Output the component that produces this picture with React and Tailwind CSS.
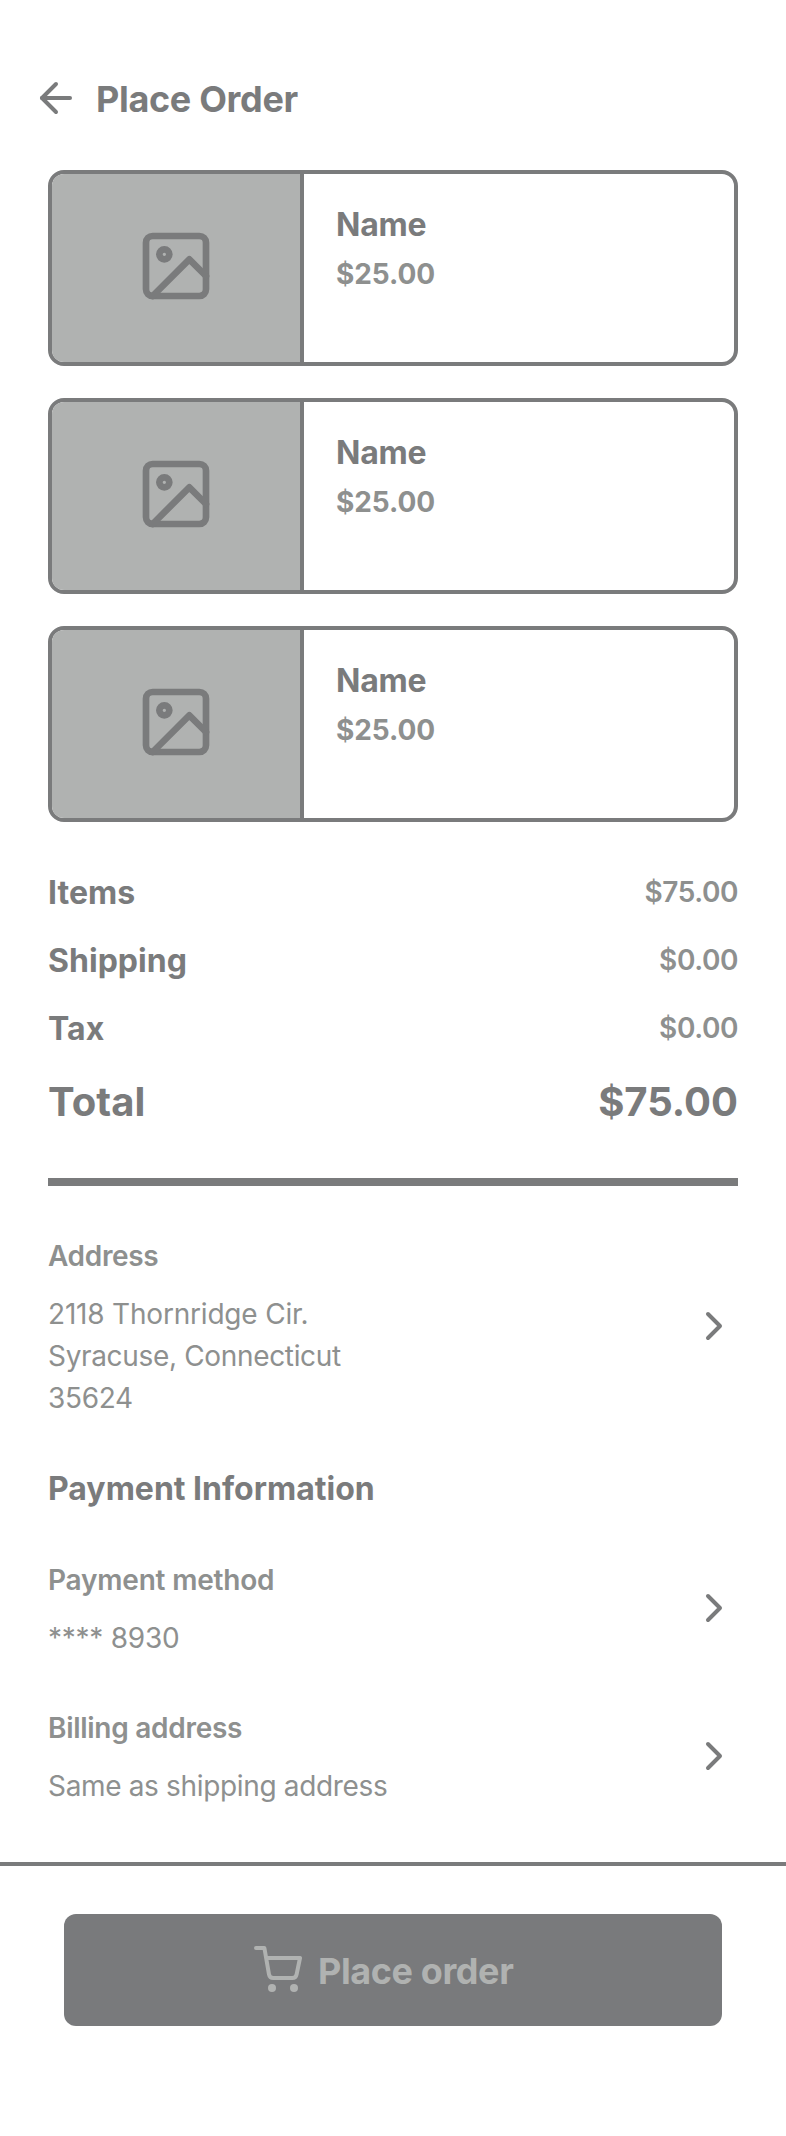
import { ArrowLeft, ChevronRight } from "lucide-react";

const products = [
  { name: "Name", price: "$25.00" },
  { name: "Name", price: "$25.00" },
  { name: "Name", price: "$25.00" },
];

const costs = [
  { label: "Items", value: "$75.00" },
  { label: "Shipping", value: "$0.00" },
  { label: "Tax", value: "$0.00" },
];

function PictureIcon() {
  return (
    <svg
      className="mb-1 size-20"
      viewBox="0 0 24 24"
      fill="none"
      stroke="currentColor"
      strokeWidth="2"
      strokeLinecap="round"
      strokeLinejoin="round"
    >
      <rect x="3" y="3" width="18" height="18" rx="2" />
      <circle cx="8.5" cy="8.5" r="1.5" />
      <path d="M21 15l-5-5L5 21" />
    </svg>
  );
}

function CartIcon() {
  return (
    <svg
      className="size-12 shrink-0"
      viewBox="0 0 48 48"
      fill="none"
      stroke="currentColor"
      strokeWidth="4"
      strokeLinecap="round"
      strokeLinejoin="round"
    >
      <path d="M2 2h8.4l4.6 26.4a4.4 4.4 0 0 0 4.3 3.6h19a4.4 4.4 0 0 0 4.3-3.6L46 12H13" />
      <circle cx="18" cy="42" r="4" fill="currentColor" stroke="none" />
      <circle cx="40" cy="42" r="4" fill="currentColor" stroke="none" />
    </svg>
  );
}

function ProductCard({ name, price }) {
  return (
    <article className="flex h-[196px] overflow-hidden rounded-2xl border-4 border-[#7a7b7c] bg-white">
      <div className="flex w-[252px] items-center justify-center border-r-4 border-[#7a7b7c] bg-[#b0b2b1]">
        <PictureIcon />
      </div>
      <div className="flex flex-col gap-[13px] pt-[31px] pl-8">
        <h2 className="text-[32px] leading-[39px] font-bold tracking-[-0.008em]">{name}</h2>
        <p className="text-[28px] leading-[34px] font-bold tracking-[-0.002em] text-[#8e908f]">{price}</p>
      </div>
    </article>
  );
}

function DetailRow({ label, labelClass, children }) {
  return (
    <button className="flex w-full items-center justify-between text-left">
      <span className="flex flex-col gap-[14px] text-[28px] text-[#8e908f]">
        <span className={`leading-[46px] font-semibold ${labelClass}`}>{label}</span>
        <span className="w-[310px] leading-[42px] tracking-[-0.012em]">{children}</span>
      </span>
      <ChevronRight className="size-12" strokeWidth={2} />
    </button>
  );
}

export default function App() {
  return (
    <div className="flex h-[2136px] w-[786px] flex-col bg-white font-[Inter,sans-serif] text-[#7a7b7c]">
      <header className="flex items-start gap-4 pt-[74px] pl-8">
        <ArrowLeft className="size-12" strokeWidth={2} />
        <h1 className="pt-[3px] text-4xl leading-[44px] font-bold tracking-[-0.009em]">Place Order</h1>
      </header>

      <main className="flex flex-col px-12 pt-12">
        <section className="flex flex-col gap-8">
          {products.map((product, i) => (
            <ProductCard key={i} {...product} />
          ))}
        </section>

        <section className="flex flex-col gap-[29px] pt-[51px]">
          {costs.map(({ label, value }) => (
            <div key={label} className="flex items-start justify-between">
              <span className="text-[32px] leading-[39px] font-bold tracking-[0.001em]">{label}</span>
              <span className="pt-0.5 text-[28px] leading-[34px] font-semibold tracking-[-0.015em] text-[#8e908f]">
                {value}
              </span>
            </div>
          ))}
          <div className="flex justify-between text-[40px] leading-[49px] font-bold">
            <span className="tracking-[0.002em]">Total</span>
            <span>$75.00</span>
          </div>
        </section>

        <hr className="mt-[52px] h-2 border-0 bg-[#7a7b7c]" />

        <section className="pt-[47px]">
          <DetailRow label="Address" labelClass="tracking-[-0.012em]">
            <span className="tracking-[-0.007em]">2118 Thornridge Cir.</span> Syracuse, Connecticut 35624
          </DetailRow>
        </section>

        <section className="flex flex-col pt-[50px]">
          <h2 className="mb-[49px] text-[32px] leading-[39px] font-bold">Payment Information</h2>
          <div className="flex flex-col gap-[46px]">
            <DetailRow label="Payment method" labelClass="tracking-[-0.007em]">
              <span className="tracking-[-0.009em]">**** 8930</span>
            </DetailRow>
            <DetailRow label="Billing address" labelClass="tracking-[-0.01em]">
              <span className="whitespace-nowrap">Same as shipping address</span>
            </DetailRow>
          </div>
        </section>
      </main>

      <footer className="mt-[55px] border-t-4 border-[#7a7b7c] px-16 pt-12">
        <button className="flex h-28 w-[658px] items-center gap-4 rounded-xl bg-[#797a7c] pl-[190px] text-[#b0b2b1]">
          <CartIcon />
          <span className="mt-0.5 text-4xl leading-[44px] font-bold tracking-[-0.011em]">Place order</span>
        </button>
      </footer>
    </div>
  );
}
